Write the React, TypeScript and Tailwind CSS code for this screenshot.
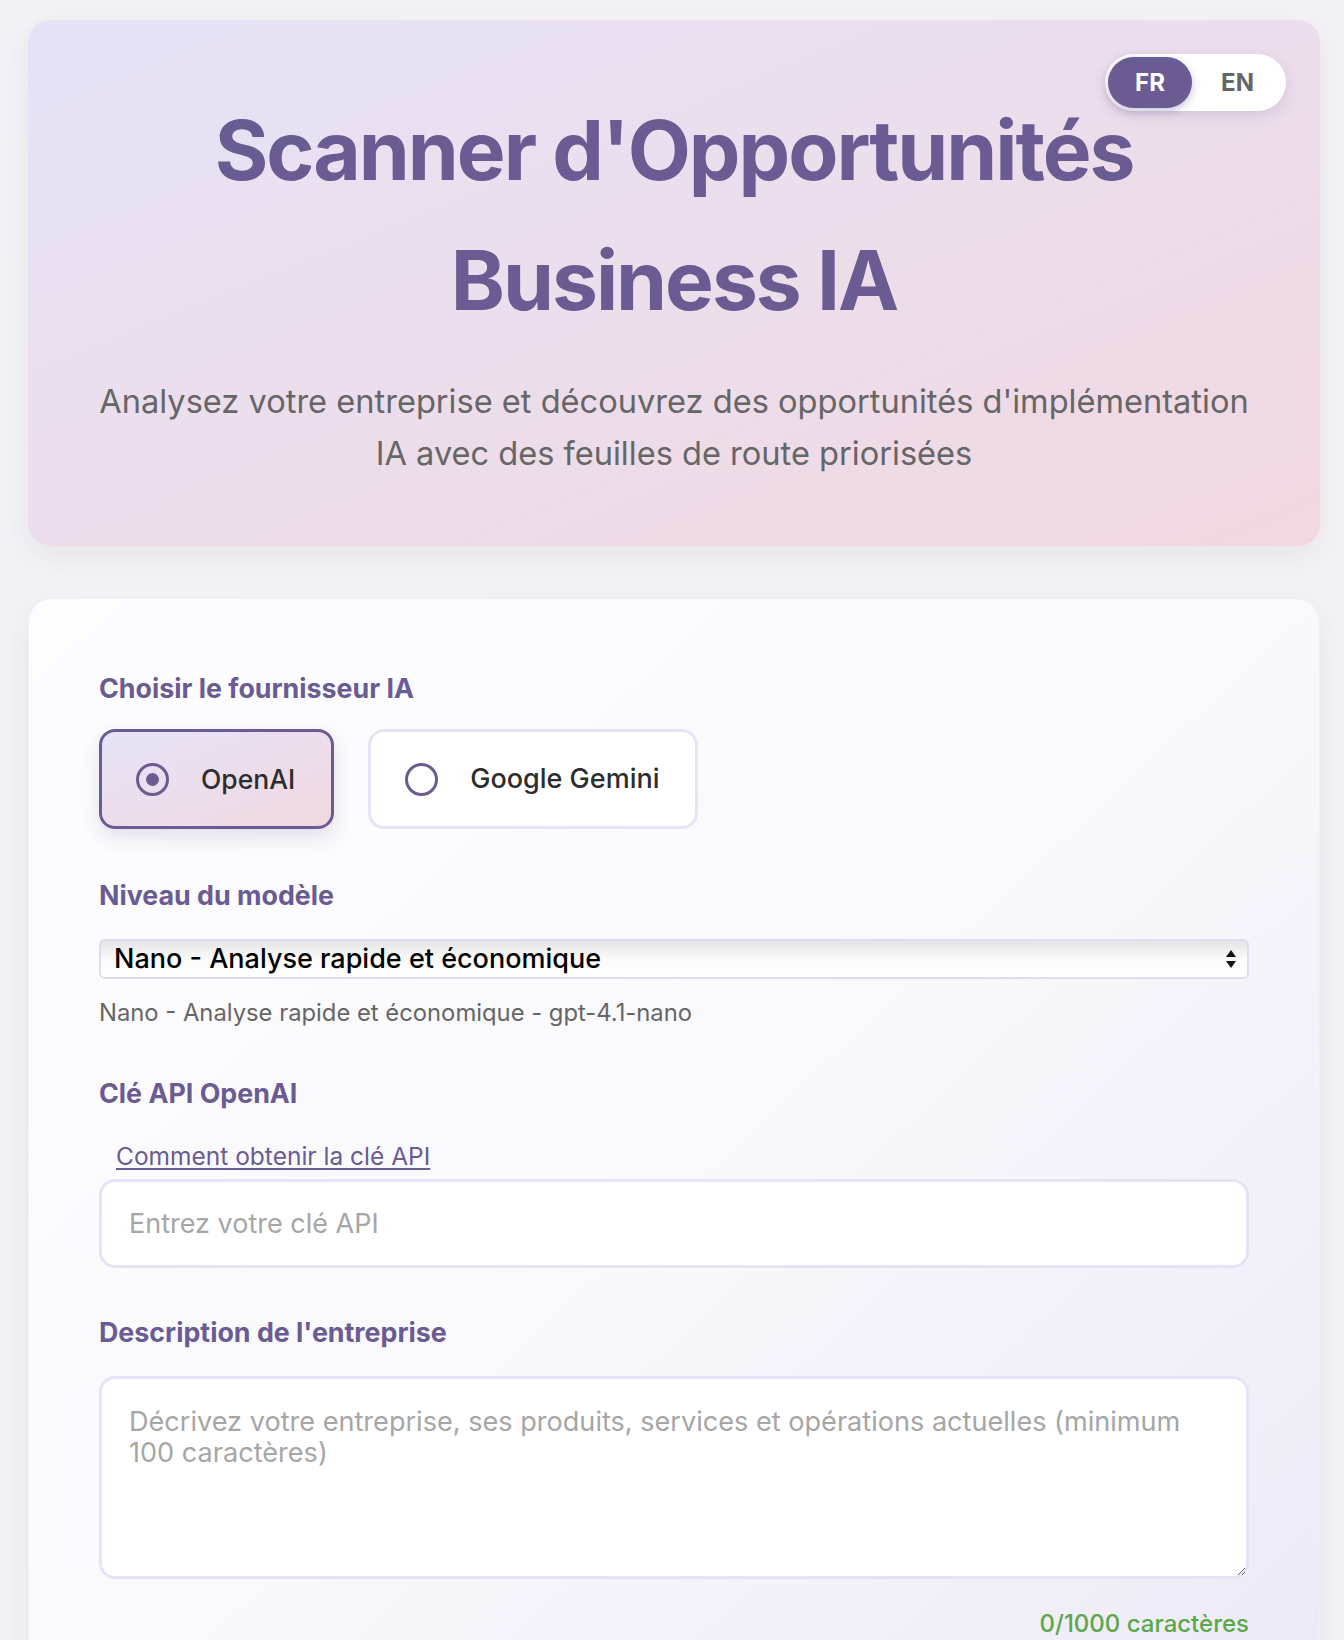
import React, { useState } from "react";

export default function App() {
  const [provider, setProvider] = useState<"openai" | "gemini">("openai");
  const [lang, setLang] = useState<"fr" | "en">("fr");
  const [desc, setDesc] = useState("");

  return (
    <div
      className="min-h-screen bg-[#f3f3f5] pt-[20px] pb-[60px] leading-[1.6]"
      style={{ fontFamily: "Inter, 'Noto Sans', sans-serif" }}
    >
      <div className="ml-[28px] w-[1292px]">
        {/* Header */}
        <header className="relative rounded-[22px] bg-linear-to-br from-[#e6e3f7] to-[#f1d8e1] pt-[66px] pb-[67px] px-[40px] text-center shadow-[0_10px_30px_rgba(60,50,90,0.08)]">
          <div className="absolute top-[34px] right-[34px] flex items-center rounded-full bg-white p-[3px] shadow-[0_4px_14px_rgba(80,60,120,0.15)]">
            <button
              onClick={() => setLang("fr")}
              className={`h-[51px] w-[84px] rounded-full text-[24px] font-bold leading-none ${
                lang === "fr"
                  ? "bg-[#6a5b93] text-white shadow-[0_3px_8px_rgba(80,60,120,0.3)]"
                  : "text-[#666666]"
              }`}
            >
              FR
            </button>
            <button
              onClick={() => setLang("en")}
              className={`h-[51px] w-[91px] rounded-full text-[24px] font-bold leading-none ${
                lang === "en"
                  ? "bg-[#6a5b93] text-white shadow-[0_3px_8px_rgba(80,60,120,0.3)]"
                  : "text-[#666666]"
              }`}
            >
              EN
            </button>
          </div>
          <h1 className="mx-auto w-[1000px] text-[82px] font-bold leading-[130px] tracking-[-0.025em] text-[#6a5b93]">
            Scanner d'Opportunités Business IA
          </h1>
          <p className="mt-[29px] text-[32.6px] leading-[52px] text-[#666666]">
            Analysez votre entreprise et découvrez des opportunités d'implémentation
            <br />
            IA avec des feuilles de route priorisées
          </p>
        </header>

        {/* Form card */}
        <main className="mt-[52px] rounded-[24px] border border-[#f0eefa] bg-linear-to-br from-[#fdfdff] via-[#f9f8fc] to-[#ebe8f5] px-[70px] pt-[70px] pb-[160px] shadow-[0_10px_30px_rgba(60,50,90,0.07)]">
          {/* Provider */}
          <h2 className="text-[26.8px] font-bold leading-[38px] text-[#6a5b93]">
            Choisir le fournisseur IA
          </h2>
          <div className="mt-[22px] flex gap-[34px]">
            <button
              onClick={() => setProvider("openai")}
              className={`flex h-[100px] items-center gap-[32px] rounded-[16px] border-[3px] pl-[34px] pr-[36px] ${
                provider === "openai"
                  ? "border-[#6a5b93] bg-linear-to-br from-[#e6e3f7] to-[#f1d8e1] shadow-[0_8px_20px_rgba(80,60,120,0.15)]"
                  : "border-[#e6e3f6] bg-white"
              }`}
            >
              <span className="flex h-[33px] w-[33px] items-center justify-center rounded-full border-[3px] border-[#6a5b93]">
                {provider === "openai" && (
                  <span className="h-[13px] w-[13px] rounded-full bg-[#6a5b93]" />
                )}
              </span>
              <span className="text-[26.5px] font-medium text-[#2d2d2d]">OpenAI</span>
            </button>
            <button
              onClick={() => setProvider("gemini")}
              className={`flex h-[100px] items-center gap-[32px] rounded-[16px] border-[3px] pl-[34px] pr-[36px] ${
                provider === "gemini"
                  ? "border-[#6a5b93] bg-linear-to-br from-[#e6e3f7] to-[#f1d8e1] shadow-[0_8px_20px_rgba(80,60,120,0.15)]"
                  : "border-[#e6e3f6] bg-white"
              }`}
            >
              <span className="flex h-[33px] w-[33px] items-center justify-center rounded-full border-[3px] border-[#6a5b93]">
                {provider === "gemini" && (
                  <span className="h-[13px] w-[13px] rounded-full bg-[#6a5b93]" />
                )}
              </span>
              <span className="text-[27px] font-medium text-[#2d2d2d]">Google Gemini</span>
            </button>
          </div>

          {/* Model level */}
          <h2 className="mt-[47px] text-[26.8px] font-bold leading-[38px] text-[#6a5b93]">
            Niveau du modèle
          </h2>
          <div className="relative mt-[25px]">
            <select className="block h-[40px] w-full appearance-none rounded-[6px] border-2 border-[#e0dbf3] bg-linear-to-b from-[#e4e4e4] via-[#fbfbfb] to-white pl-[13px] pr-[40px] text-[27px] font-medium leading-[36px] text-black outline-none">
              <option>Nano - Analyse rapide et économique</option>
              <option>Mini - Analyse équilibrée</option>
              <option>Standard - Analyse approfondie</option>
            </select>
            <svg
              className="pointer-events-none absolute right-[12px] top-[10px]"
              width="12"
              height="20"
              viewBox="0 0 12 20"
            >
              <path d="M6 1 L11 8 L1 8 Z" fill="#111" />
              <path d="M6 19 L11 12 L1 12 Z" fill="#111" />
            </svg>
          </div>
          <p className="mt-[16px] text-[23.8px] leading-[36px] text-[#666666]">
            Nano - Analyse rapide et économique - gpt-4.1-nano
          </p>

          {/* API key */}
          <h2 className="mt-[43px] text-[26.8px] font-bold leading-[38px] text-[#6a5b93]">
            Clé API OpenAI
          </h2>
          <div className="mt-[26px] ml-[17px]">
            <a
              href="#"
              className="text-[24.5px] leading-[36px] text-[#6a5b93] underline underline-offset-[3px]"
            >
              Comment obtenir la clé API
            </a>
          </div>
          <input
            type="password"
            placeholder="Entrez votre clé API"
            className="mt-[5px] block h-[89px] w-full rounded-[16px] border-[3px] border-[#e6e3f6] bg-white px-[27px] text-[27px] text-[#2d2d2d] outline-none placeholder:text-[#a6a6a6]"
          />

          {/* Description */}
          <h2 className="mt-[45px] text-[26.8px] font-bold leading-[38px] text-[#6a5b93]">
            Description de l'entreprise
          </h2>
          <textarea
            value={desc}
            onChange={(e) => setDesc(e.target.value)}
            placeholder="Décrivez votre entreprise, ses produits, services et opérations actuelles (minimum 100 caractères)"
            className="mt-[25px] block h-[203px] w-full resize-y rounded-[16px] border-[3px] border-[#e6e3f6] bg-white px-[27px] pt-[27px] text-[27.1px] leading-[31px] text-[#2d2d2d] outline-none placeholder:text-[#a6a6a6]"
          />
          <p className="mt-[27px] text-right text-[24px] font-medium leading-[36px] text-[#5aa84a]">
            {desc.length}/1000 caractères
          </p>
        </main>
      </div>
    </div>
  );
}
